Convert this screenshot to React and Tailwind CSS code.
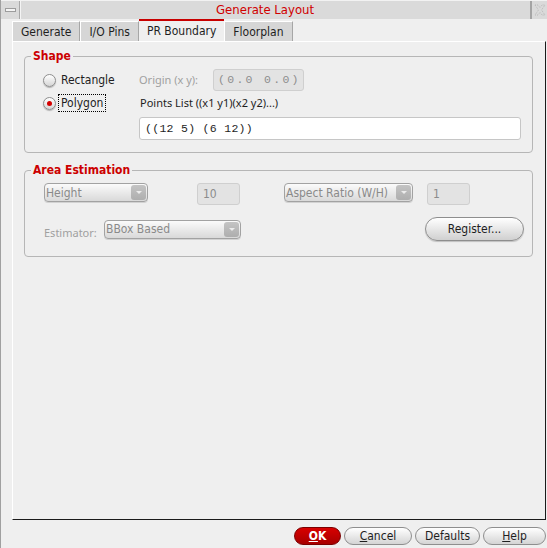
import React from 'react';

const ui = "font-['DejaVu_Sans_Condensed','DejaVu_Sans',sans-serif] font-stretch-condensed";
const lbl = "font-['Noto_Sans',sans-serif]";
const mono = "font-['Liberation_Mono',monospace]";

function Radio({ checked }) {
  return (
    <span className="w-[13px] h-[13px] rounded-full border border-[#8e8e8e] bg-gradient-to-b from-white to-[#d6d6d6] shadow-[0_1px_1px_rgba(0,0,0,0.25)] flex items-center justify-center">
      {checked && <span className="w-[5px] h-[5px] rounded-full bg-[#d40000]" />}
    </span>
  );
}

function Combo({ label, width }) {
  return (
    <div className={`${width} h-[19px] rounded-[4px] border border-[#a2a2a2] bg-gradient-to-b from-[#fbfbfb] to-[#d9d9d9] shadow-[0_1px_0_rgba(0,0,0,0.12)] flex items-center`}>
      <span className="flex-1 pl-[1px] text-[12px] text-[#8a8a8a] leading-none">{label}</span>
      <span className="w-[15px] h-[15px] mr-[1px] rounded-[3px] bg-gradient-to-b from-[#c4c4c4] to-[#aeaeae] flex items-center justify-center">
        <svg width="6" height="3" viewBox="0 0 6 3">
          <path d="M0 0H6L3 3Z" fill="#ececec" />
        </svg>
      </span>
    </div>
  );
}

function Field({ value, width }) {
  return (
    <div className={`${width} h-[22px] rounded-[3px] border border-[#cfcfcf] bg-[#e3e3e3] flex items-center pl-[5px] text-[12px] text-[#8c8c8c]`}>
      {value}
    </div>
  );
}

function Button({ children, width, primary }) {
  return (
    <button
      className={`${width} h-[18px] rounded-full border text-[12px] leading-none flex items-center justify-center ${
        primary
          ? 'border-[#7a0000] bg-gradient-to-b from-[#d80000] to-[#a80000] text-white font-bold'
          : 'border-[#8e8e8e] bg-gradient-to-b from-white to-[#d4d4d4] text-[#1e1e1e]'
      }`}
    >
      {children}
    </button>
  );
}

export default function App() {
  return (
    <div className={`w-[547px] h-[548px] bg-[#efefef] border-l border-[#a0a0a0] flex flex-col overflow-hidden text-[#1e1e1e] ${ui}`}>
      {/* window title bar */}
      <div className="h-[19px] flex bg-[#dadada] border-t border-[#f2f2f2]">
        <div className="w-[19px] border-r border-[#a8a8a8] flex items-center justify-center">
          <span className="w-[11px] h-[4px] border border-[#9c9c9c] bg-[#f4f4f4]" />
        </div>
        <div className="flex-1 border-l border-[#f4f4f4] flex items-center pl-[195px] text-[13px] text-[#d00000]">
          Generate Layout
        </div>
        <div className="w-[17px] border-l-2 border-[#a4a4a4] flex items-center justify-center">
          <svg width="12" height="12" viewBox="0 0 12 12">
            <path
              d="M1 1H4L6 3.5L8 1H11L7.5 6L11 11H8L6 8.5L4 11H1L4.5 6Z"
              fill="none"
              stroke="#b8b8b8"
              strokeWidth="1"
              strokeDasharray="1 1"
            />
          </svg>
        </div>
      </div>

      {/* tabs */}
      <div className="h-[22px] pl-[11px] flex items-end text-[12px]">
        {['Generate', 'I/O Pins', 'PR Boundary', 'Floorplan'].map((t) =>
          t === 'PR Boundary' ? (
            <div key={t} className="h-[22px] px-[8px] border-t-2 border-[#c80000] bg-[#efefef] flex items-center">
              {t}
            </div>
          ) : (
            <div key={t} className="h-[20px] px-[8px] bg-[#d6d6d6] border-t border-l border-white border-r border-r-[#a6a6a6] flex items-center">
              {t}
            </div>
          )
        )}
      </div>

      {/* tab page */}
      <div className="ml-[11px] mr-[1px] h-[479px] border-l border-t border-l-white border-t-white border-r border-b border-r-[#1a1a1a] border-b-[#1a1a1a] pl-[11px] pr-[12px]">
        <fieldset className="mt-[7px] border border-[#b6b6b6] rounded-[4px] pb-[12px]">
          <legend className="ml-[6px] px-[2px] text-[12px] leading-[14px] font-bold text-[#cc0000]">Shape</legend>
          <div className="mt-[6px] h-[22px] flex items-center">
            <div className="w-[114px] pl-[18px] flex items-center gap-[5px]">
              <Radio />
              <span className="text-[12px]">Rectangle</span>
            </div>
            <span className={`w-[74px] text-[11px] text-[#a0a0a0] ${lbl}`}>Origin (x y):</span>
            <div className={`w-[91px] h-[22px] rounded-[3px] border border-[#cfcfcf] bg-[#e3e3e3] flex items-center pl-[4px] text-[11.5px] tracking-[2.3px] text-[#8e8e8e] ${mono}`}>
              (0.0 0.0)
            </div>
          </div>
          <div className="mt-[3px] h-[18px] flex items-center">
            <div className="w-[114px] pl-[18px] flex items-center gap-[2px]">
              <Radio checked />
              <span className="px-[2px] h-[18px] border border-dotted border-black text-[12px] flex items-center">Polygon</span>
            </div>
            <span className={`pl-[1px] text-[11px] ${lbl}`}>Points List ((x1 y1)(x2 y2)...)</span>
          </div>
          <div className="mt-[5px] ml-[114px] w-[382px] h-[23px] rounded-[3px] border border-[#c6c6c6] bg-white flex items-center pl-[5px]">
            <span className={`text-[11.5px] tracking-[0.3px] text-[#1e1e1e] ${mono}`}>((12 5) (6 12))</span>
          </div>
        </fieldset>

        <fieldset className="mt-[10px] border border-[#b6b6b6] rounded-[4px] pb-[15px]">
          <legend className="ml-[6px] px-[2px] text-[12px] leading-[14px] font-bold text-[#cc0000]">Area Estimation</legend>
          <div className="mt-[6px] pl-[19px] flex items-start">
            <Combo label="Height" width="w-[104px]" />
            <div className="ml-[49px]">
              <Field value="10" width="w-[43px]" />
            </div>
            <div className="ml-[44px]">
              <Combo label="Aspect Ratio (W/H)" width="w-[129px]" />
            </div>
            <div className="ml-[14px]">
              <Field value="1" width="w-[43px]" />
            </div>
          </div>
          <div className="mt-[12px] pl-[19px] h-[24px] flex items-center">
            <span className={`w-[60px] pt-[8px] text-[11px] text-[#a0a0a0] ${lbl}`}>Estimator:</span>
            <Combo label="BBox Based" width="w-[137px]" />
            <button className="ml-[184px] w-[99px] h-[24px] rounded-full border border-[#8e8e8e] bg-gradient-to-b from-white to-[#d0d0d0] shadow-[0_1px_1px_rgba(0,0,0,0.2)] text-[12px] text-[#1e1e1e]">
              Register...
            </button>
          </div>
        </fieldset>
      </div>

      {/* dialog buttons */}
      <div className="mt-[7px] pr-[1px] flex justify-end gap-[3px]">
        <Button width="w-[47px]" primary>
          <span className="underline">O</span>K
        </Button>
        <Button width="w-[68px]">
          <span className="underline">C</span>ancel
        </Button>
        <Button width="w-[65px]">Defaults</Button>
        <Button width="w-[63px]">
          <span className="underline">H</span>elp
        </Button>
      </div>
    </div>
  );
}
